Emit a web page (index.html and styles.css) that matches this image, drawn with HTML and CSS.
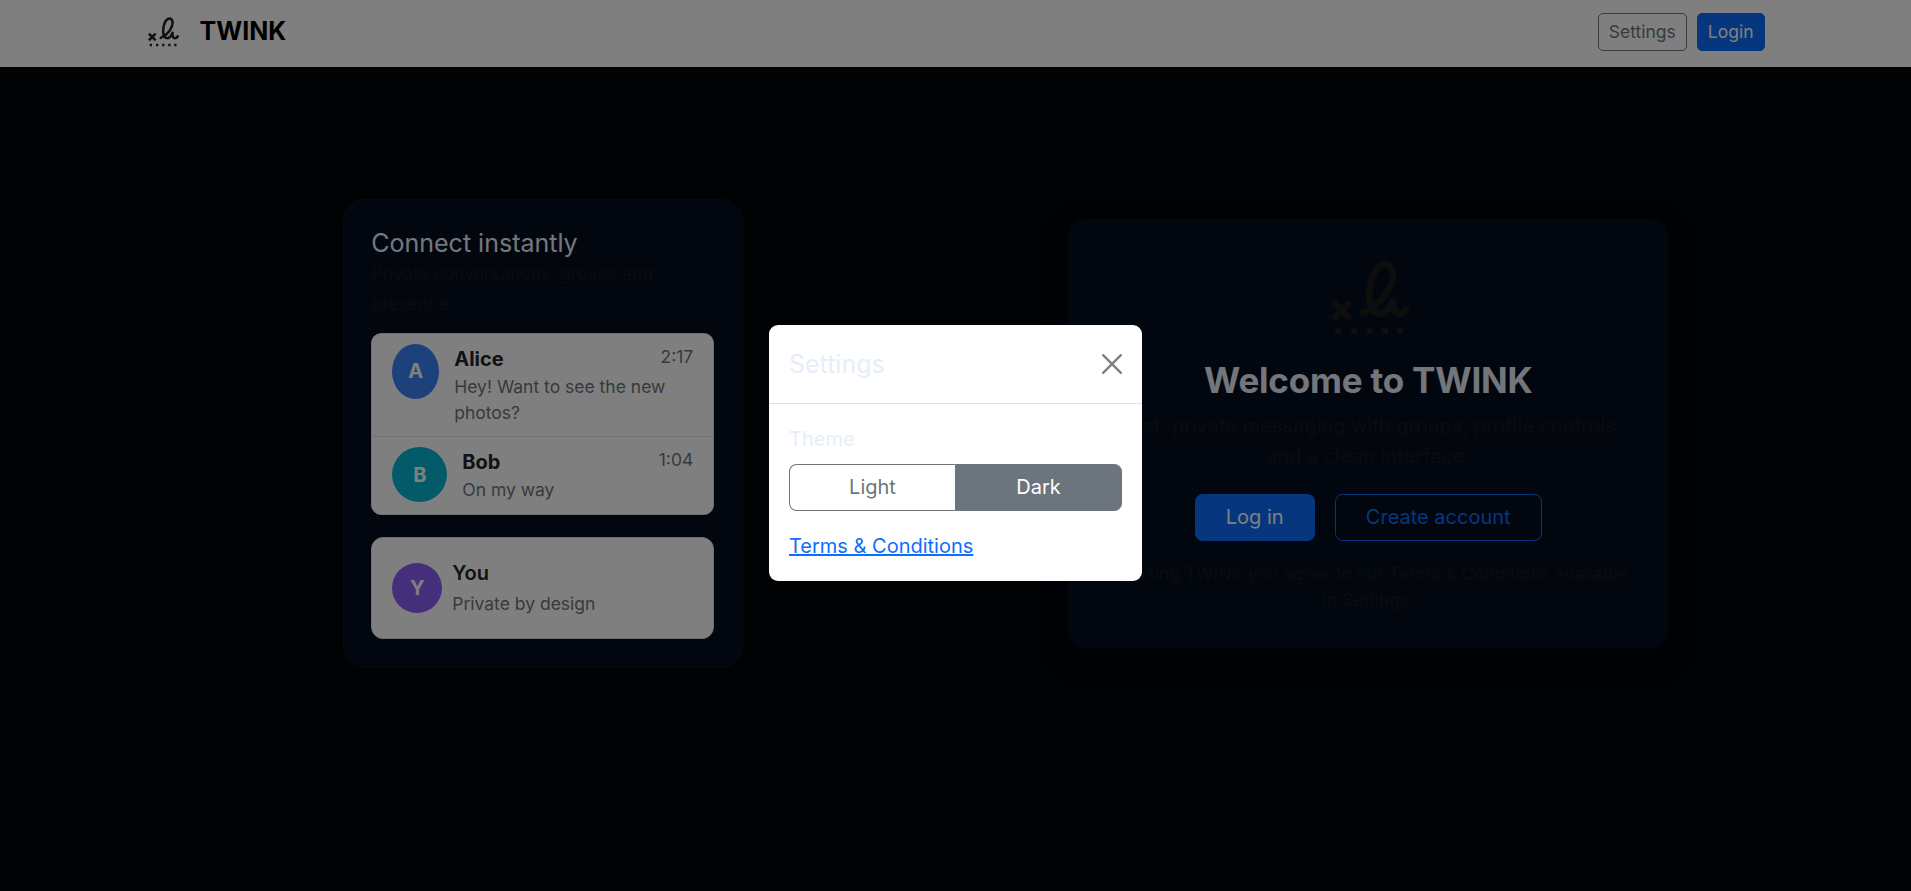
FILE: index.html
```
<!DOCTYPE html>
<html lang="en">
<head>
<meta charset="utf-8">
<title>TWINK</title>
<link rel="stylesheet" href="styles.css">
</head>
<body>
<svg width="0" height="0" class="defs" aria-hidden="true">
  <symbol id="signature" viewBox="0 0 78 76">
    <g fill="none" stroke="currentColor" stroke-width="6.5">
      <path d="M2 42l17 17M19 42L2 59"/>
      <path stroke-linejoin="round" stroke-linecap="round" d="M32 53C50 45 63 27 62 13C60 0 48 1 42 15C36 31 37 48 45 53C53 56 59 48 62 40C61 48 64 54 68 54C71 54 74 51 75 49"/>
    </g>
    <path fill="currentColor" d="M4 68h6v6H4zM20 68h6v6h-6zM35.500 68h6v6h-6zM51 68h6v6h-6zM66 68h6v6h-6z"/>
  </symbol>
</svg>
<nav class="navbar">
  <div class="nav-inner">
    <a class="brand"><svg class="brand-logo"><use href="#signature"/></svg><span>TWINK</span></a>
    <div class="nav-actions">
      <button class="btn btn-sm btn-outline">Settings</button>
      <button class="btn btn-sm btn-primary">Login</button>
    </div>
  </div>
</nav>
<main class="page">
  <div class="col">
    <section class="preview">
      <h5 class="title">Connect instantly</h5>
      <div class="sub">Private conversations, groups and presence</div>
      <ul class="chats">
        <li class="chat">
          <div class="avatar blue">A</div>
          <div class="chat-body"><div class="name">Alice</div><div class="msg">Hey! Want to see the new photos?</div></div>
          <div class="time">2:17</div>
        </li>
        <li class="chat">
          <div class="avatar teal">B</div>
          <div class="chat-body"><div class="name">Bob</div><div class="msg">On my way</div></div>
          <div class="time">1:04</div>
        </li>
      </ul>
      <div class="you">
        <div class="avatar small violet">Y</div>
        <div><div class="you-name">You</div><div class="you-msg">Private by design</div></div>
      </div>
    </section>
  </div>
  <div class="col">
    <section class="welcome">
      <svg class="hero-logo"><use href="#signature"/></svg>
      <h1 class="hero-title">Welcome to TWINK</h1>
      <p class="lead">Fast, private messaging with groups, profile controls and a clean interface.</p>
      <div class="actions">
        <button class="btn btn-primary login">Log in</button>
        <button class="btn btn-outline-primary create">Create account</button>
      </div>
      <p class="note">By using TWINK you agree to our Terms &amp; Conditions available in Settings.</p>
    </section>
  </div>
</main>
<div class="backdrop"></div>
<div class="modal">
  <div class="dialog">
    <div class="modal-header">
      <h5 class="title">Settings</h5>
      <svg class="close" viewBox="0 0 16 16"><path d="M.9.9l14.2 14.2M15.1.9L.9 15.1"/></svg>
    </div>
    <div class="modal-body">
      <div class="label">Theme</div>
      <div class="group"><button class="btn seg">Light</button><button class="btn seg active">Dark</button></div>
      <a class="terms" href="#">Terms &amp; Conditions</a>
    </div>
  </div>
</div>
</body>
</html>
```
FILE: styles.css
```
* { box-sizing: border-box; }
html, body { height: 100%; }
body {
  margin: 0;
  overflow: hidden;
  background: #020409;
  color: #e6eef8;
  font: 400 20px/30px Inter, "Liberation Sans", sans-serif;
}
h1, h5, p, ul { margin: 0; padding: 0; font-weight: 400; }
.defs { position: absolute; }

.btn {
  font: inherit;
  padding: 7px 15px 8px;
  border: 1px solid transparent;
  border-radius: 7.5px;
  background: none;
  white-space: nowrap;
}
.btn-sm { font-size: 17.5px; line-height: 26px; padding: 5px 10px; border-radius: 5px; }
.btn-outline { color: #6c757d; border-color: #6c757d; }
.btn-primary { color: #fff; background: #0d6efd; border-color: #0d6efd; }
.btn-outline-primary { color: #0d6efd; border-color: #0d6efd; }

.navbar { height: 67px; background: #fff; display: flex; justify-content: center; }
.nav-inner { width: 1650px; padding: 0 16px 0 15px; display: flex; justify-content: space-between; align-items: center; }
.brand { display: flex; align-items: center; gap: 21px; color: #000; font-size: 25px; font-weight: 700; line-height: 37px; padding-left: 2px; padding-bottom: 4px; }
.brand-logo { width: 31px; height: 30px; color: #212529; }
.nav-actions { display: flex; gap: 10px; padding-bottom: 3px; }

.page { width: 1650px; margin: 0 auto; height: 733px; display: flex; align-items: center; }
.col { flex: 1; display: flex; justify-content: center; }
.col:first-child { padding-right: 1px; }

.title { font-size: 25px; line-height: 30px; }
.preview {
  width: 400px;
  padding: 27.5px;
  border: 1px solid #0c1422;
  border-radius: 22px;
  background: #040c1c;
}
.sub { font-size: 17.5px; color: #121923; padding-top: 1px; }
.chats {
  list-style: none;
  margin: 14px 0 22.5px;
  background: #fff;
  border: 1px solid #dee2e6;
  border-radius: 10px;
}
.chat { display: flex; align-items: flex-start; padding: 10px 20px; }
.chat + .chat { border-top: 1px solid #dee2e6; }
.avatar {
  width: 55px;
  height: 55px;
  border-radius: 50%;
  display: flex;
  align-items: center;
  justify-content: center;
  color: #fff;
  font-weight: 700;
}
.avatar.small { width: 50px; height: 50px; }
.blue { background: #3b82f6; }
.teal { background: #06b6d4; }
.violet { background: #8b5cf6; }
.chat .avatar { margin-right: 15px; }
.chat:first-child .avatar { width: 47px; flex: none; }
.chat-body { flex: 1; }
.name { font-weight: 700; color: #212529; }
.msg { font-size: 17.5px; line-height: 26.25px; color: #6c757d; margin-right: -15px; }
.chat .time { font-size: 17.5px; line-height: 26.25px; color: #6c757d; }
.you {
  display: flex;
  align-items: center;
  gap: 10px;
  padding: 20px;
  border: 1px solid #dee2e6;
  border-radius: 12px;
  background: #fff;
}
.you-name { font-weight: 600; color: #212529; }
.you-msg { font-size: 17.5px; line-height: 29px; padding-top: 1px; color: #6c757d; }

.welcome {
  width: 600px;
  height: 429px;
  padding: 41px 40px 0;
  border-radius: 15px;
  background: #040c1c;
  box-shadow: 0 10px 30px rgba(5, 7, 10, .3);
  text-align: center;
}
.hero-logo { display: block; width: 78px; height: 76px; margin: 0 auto 23px; color: #1c1c1c; position: relative; left: 2px; }
.hero-title { font-size: 35px; line-height: 42px; font-weight: 700; margin-bottom: 10px; letter-spacing: -.2px; }
.lead { color: #121923; margin-bottom: 23px; }
.actions { display: flex; justify-content: center; gap: 20px; margin-bottom: 20px; }
.login { width: 120px; }
.create { width: 207px; }
.note { font-size: 17.5px; line-height: 26.25px; color: #121923; }

.backdrop { position: fixed; inset: 0; background: rgba(0, 0, 0, .5); }
.modal { position: fixed; inset: 0; display: flex; justify-content: center; align-items: flex-start; padding-top: 325px; }
.dialog { width: 373px; background: #fff; border-radius: 9px; }
.modal-header { display: flex; align-items: center; justify-content: space-between; height: 79px; padding: 0 20px 1px; border-bottom: 1px solid #dee2e6; }
.close { width: 20px; height: 20px; fill: none; stroke: #7f7f7f; stroke-width: 1.8; stroke-linecap: round; }
.modal-body { padding: 20px; }
.label { margin-bottom: 10px; }
.group { display: flex; margin-bottom: 20px; }
.seg { flex: 1; color: #6c757d; border-color: #6c757d; }
.seg:first-child { border-radius: 7.5px 0 0 7.5px; border-right: 0; }
.seg.active { background: #6c757d; color: #fff; border-radius: 0 7.5px 7.5px 0; }
.terms { display: block; width: max-content; color: #0d6efd; text-decoration: underline; }
```
